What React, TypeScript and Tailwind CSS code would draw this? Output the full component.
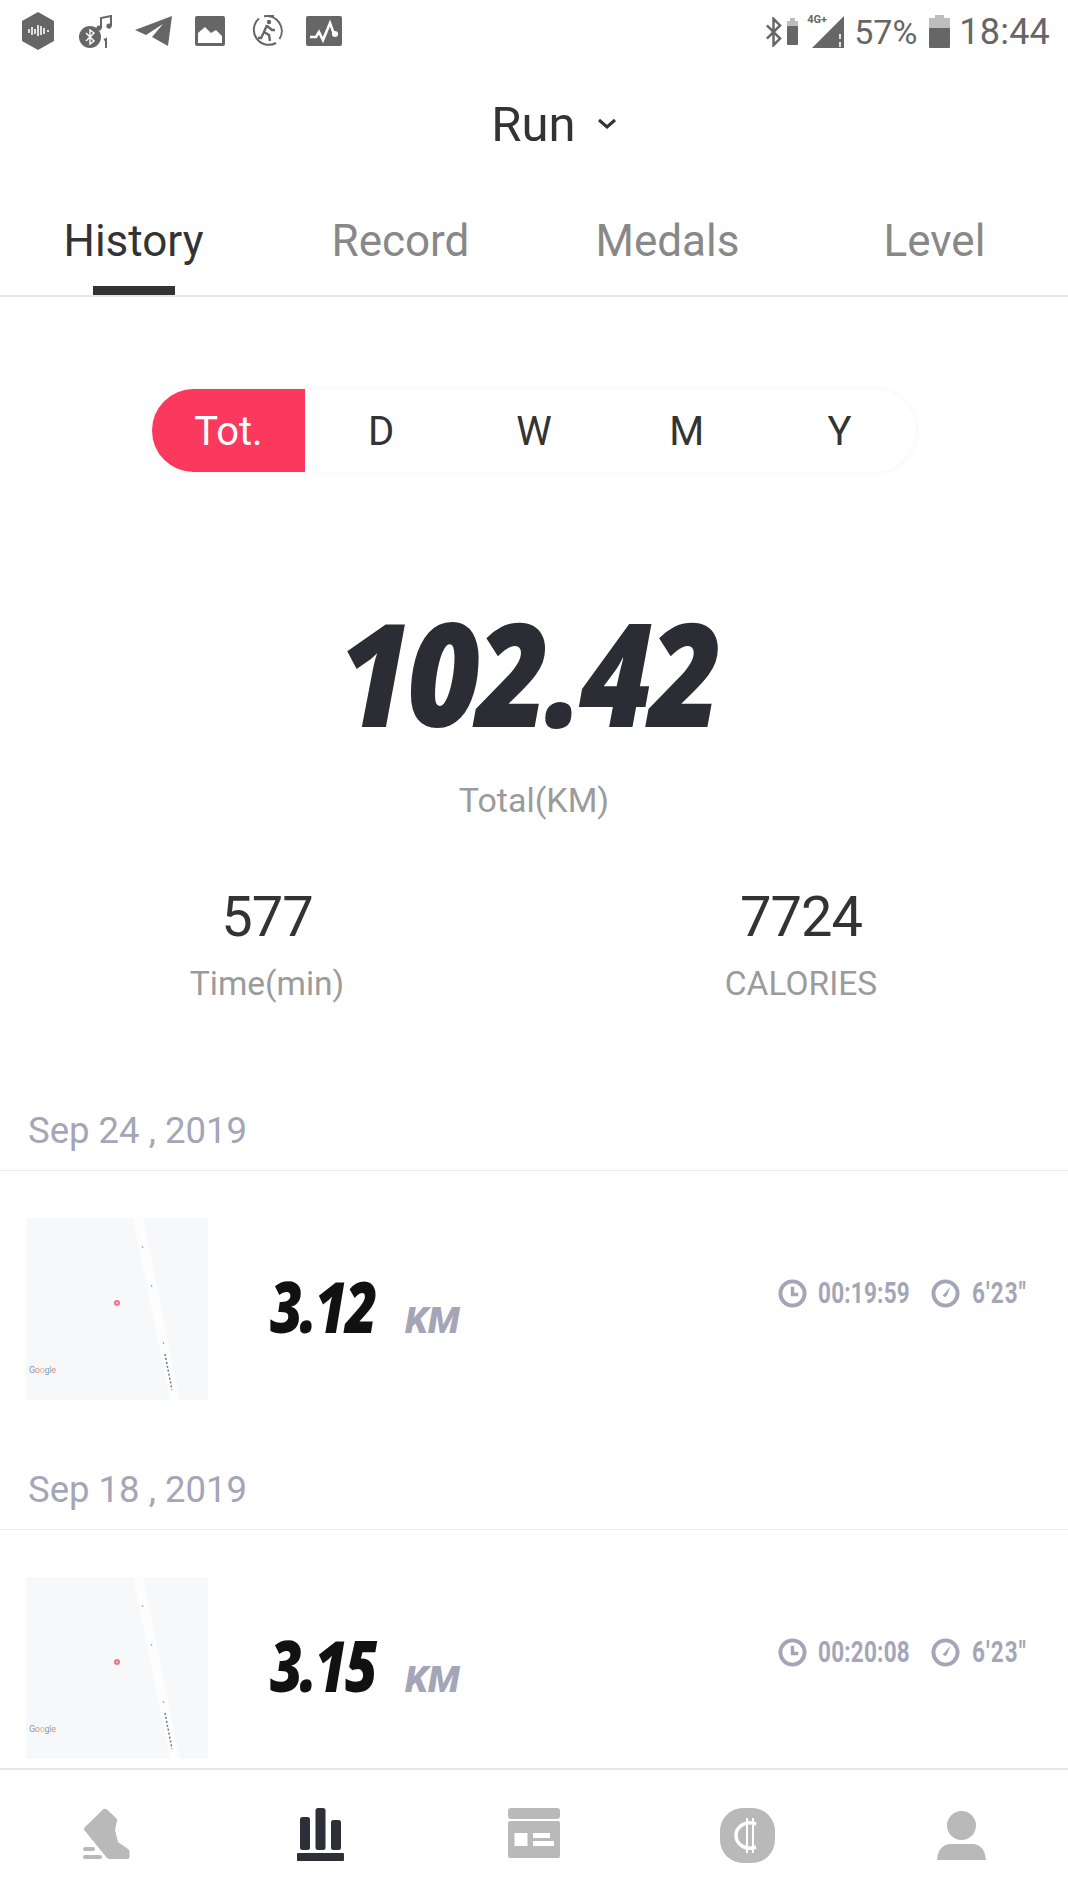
const grayIcon = "#666666"
const navGray = "#b9b9b9"
const navDark = "#2e3038"
const metaColor = "#a5a5b8"

function StatusIcons() {
    return (
        <div className="flex items-center mt-[-1px]">
            <svg width="34" height="38" viewBox="0 0 34 38" className="ml-[21px]">
                <path d="M17 0 L33 9 V29 L17 38 L1 29 V9 Z" fill={grayIcon} />
                <path d="M8 17v4M11 15v8M14 17v5M17 13v11M20 14v9M23 16v6M27 18v2" stroke="#fff" strokeWidth="1.6" fill="none" />
            </svg>
            <svg width="34" height="33" viewBox="0 0 34 33" className="ml-[24px]">
                <circle cx="11" cy="22" r="11" fill={grayIcon} />
                <path d="M7 18l8 8-4 3V15l4 3-8 8" stroke="#fff" strokeWidth="1.4" fill="none" />
                <path d="M22 13V3l10-2v10" stroke={grayIcon} strokeWidth="2" fill="none" />
                <circle cx="20" cy="13" r="2.6" fill={grayIcon} />
                <circle cx="30" cy="11" r="2.6" fill={grayIcon} />
                <path d="M25 25l2-1v9" stroke={grayIcon} strokeWidth="2" fill="none" />
            </svg>
            <svg width="37" height="32" viewBox="0 0 37 32" className="ml-[22px]">
                <path d="M0 15 L37 1 L33 31 L17 22 L28 9 L11 20 Z" fill={grayIcon} />
            </svg>
            <svg width="30" height="30" viewBox="0 0 30 30" className="ml-[23px]">
                <rect width="30" height="30" rx="2" fill={grayIcon} />
                <path d="M3 27V17l7-6 6 6 5-3 6 6v7z" fill="#fff" />
            </svg>
            <svg width="34" height="34" viewBox="0 0 34 34" className="ml-[25px]">
                <path d="M9 4.500A15 15 0 0 0 26 29M29.500 25A15 15 0 0 0 14 2.300M18 2h6" stroke={grayIcon} strokeWidth="2" fill="none" />
                <circle cx="19" cy="8" r="2.200" fill={grayIcon} />
                <path d="M17 11l-3 7 5 3 1 6M14 18l-3 6-3 0M17 12l5 4 3 0" stroke={grayIcon} strokeWidth="2.400" fill="none" />
            </svg>
            <svg width="36" height="30" viewBox="0 0 36 30" className="ml-[22px]">
                <rect width="36" height="30" rx="2" fill={grayIcon} />
                <path d="M4 21h6l3-5 4 8 7-17 4 11" stroke="#fff" strokeWidth="2.600" fill="none" />
                <circle cx="29" cy="18" r="3" fill="#fff" />
            </svg>
        </div>
    )
}

function StatusRight() {
    return (
        <div className="flex items-center text-[#666666] leading-none mr-[18px]">
            <svg width="17" height="30" viewBox="0 0 18 30">
                <path d="M2 8l14 14-7 7V1l7 7L2 22" stroke={grayIcon} strokeWidth="2.600" fill="none" />
            </svg>
            <svg width="11" height="27" viewBox="0 0 11 27" className="ml-[5px]">
                <rect x="3" width="5" height="3" fill="#bdbdbd" />
                <rect y="3" width="11" height="7" fill="#bdbdbd" />
                <rect y="8" width="11" height="19" rx="1" fill={grayIcon} />
            </svg>
            <div className="relative w-[36px] h-[33px] ml-[10px]">
                <svg width="32" height="32" viewBox="0 0 32 32" className="absolute right-0 bottom-0">
                    <path d="M0 32 L32 0 V32 Z" fill={grayIcon} />
                    <path d="M28 18v5M28 26v5" stroke="#fff" strokeWidth="1.600" />
                </svg>
                <span className="absolute left-[-1px] top-[-1px] text-[11px] font-bold leading-none">4G+</span>
            </div>
            <span className="ml-[10px] text-[34px]">57%</span>
            <svg width="21" height="33" viewBox="0 0 21 33" className="ml-[12px]">
                <rect x="6" width="9" height="3" fill="#bdbdbd" />
                <rect y="3" width="21" height="13" fill="#bdbdbd" />
                <rect y="13" width="21" height="20" rx="1" fill={grayIcon} />
            </svg>
            <span className="ml-[9px] text-[36px] tracking-[0.2px]">18:44</span>
        </div>
    )
}

function Tabs() {
    const tabs = ["History", "Record", "Medals", "Level"]
    return (
        <div className="relative grid grid-cols-4 h-[82px] mt-[60px] border-b-2 border-[#e8e8e8]">
            {tabs.map((t, i) => (
                <div key={t} className="relative flex justify-center">
                    <span className={i === 0 ? "text-[44px] leading-[52px] text-[#333333]" : "text-[44px] leading-[52px] text-[#888888]"}>{t}</span>
                    {i === 0 && <div className="absolute bottom-0 w-[82px] h-[9px] bg-[#333333]" />}
                </div>
            ))}
        </div>
    )
}

function PeriodSwitch() {
    const items = ["D", "W", "M", "Y"]
    return (
        <div className="flex justify-center mt-[92px]">
            <div className="flex w-[764px] h-[83px] rounded-[42px] bg-white shadow-[0_0_6px_rgba(0,0,0,0.05)] overflow-hidden">
                <div className="flex items-center justify-center w-[153px] pt-[3px] bg-[#fb385e] text-white text-[40px]">Tot.</div>
                {items.map(t => (
                    <div key={t} className="flex items-center justify-center w-[153px] pt-[3px] text-[#333333] text-[40px]">{t}</div>
                ))}
            </div>
        </div>
    )
}

function MapThumb() {
    return (
        <div className="relative w-[182px] h-[182px] bg-[#f7f8fa] overflow-hidden shrink-0">
            <svg width="182" height="182" viewBox="0 0 182 182" className="absolute inset-0">
                <path d="M107 0h10l37 182h-10z" fill="#fdfdfd" />
                <path d="M116 28l1 2M125 67l1 2M137 124l1 2" stroke="#999999" strokeWidth="1" />
                <path d="M139 136l7 36" stroke="#777777" strokeWidth="1.500" strokeDasharray="2 2" />
                <circle cx="91" cy="85" r="3" fill="#e8788c" />
                <circle cx="91" cy="85" r="1" fill="#f3c9d0" />
            </svg>
            <span className="absolute left-[3px] top-[148px] text-[9px] leading-none tracking-[-0.3px]">
                <span className="text-[#7a9ad8]">G</span>
                <span className="text-[#e08a80]">o</span>
                <span className="text-[#e3c070]">o</span>
                <span className="text-[#7a9ad8]">g</span>
                <span className="text-[#8cbf8c]">l</span>
                <span className="text-[#e08a80]">e</span>
            </span>
        </div>
    )
}

function RunRow({ date, km, time, pace }: { date: string, km: string, time: string, pace: string }) {
    return (
        <div>
            <div className="h-[62px] pl-[28px] text-[36.500px] leading-[44px] text-[#a5a5b8] border-b border-[#ececec]">{date}</div>
            <div className="flex h-[297px] pl-[26px] pt-[47px]">
                <MapThumb />
                <div className="flex items-baseline h-fit ml-[62px] mt-[56px]">
                    <span className="w-[135px] text-[70px] leading-[64px] font-extrabold italic text-[#111111] font-['Open_Sans',sans-serif] tracking-[-3px] scale-x-[0.8] origin-left">{km}</span>
                    <span className="text-[37px] leading-none font-black italic text-[#a5a5b8]">KM</span>
                </div>
                <div className="flex items-center h-fit ml-auto mr-[41px] mt-[59px] text-[30px] leading-[32px] font-bold text-[#a5a5b8] font-['Roboto',sans-serif]">
                    <svg width="29" height="29" viewBox="0 0 30 30">
                        <circle cx="15" cy="15" r="12.500" stroke={metaColor} strokeWidth="4" fill="none" />
                        <path d="M15 8v8h6" stroke={metaColor} strokeWidth="3.500" fill="none" />
                    </svg>
                    <span className="ml-[11px] w-[90px] scale-x-75 origin-left tracking-[0.3px] whitespace-nowrap">{time}</span>
                    <svg width="29" height="29" viewBox="0 0 30 30" className="ml-[23px]">
                        <circle cx="15" cy="15" r="12.500" stroke={metaColor} strokeWidth="4" fill="none" />
                        <path d="M20 8l-5 6-3 3 3 2 2-3z" fill={metaColor} />
                    </svg>
                    <span className="ml-[12px] w-[55px] scale-x-75 origin-left tracking-[1.5px] whitespace-nowrap">{pace}</span>
                </div>
            </div>
        </div>
    )
}

function BottomNav() {
    return (
        <div className="absolute left-0 right-0 bottom-0 h-[132px] bg-white border-t-2 border-[#e8e8e8] grid grid-cols-5 pt-[38px]">
            <div className="flex justify-center">
                <svg width="47" height="52" viewBox="0 0 47 52">
                    <path d="M20 1.500Q22 0 24 1.500L33 10Q35 12 33.500 15L32 22L35 34L45 41Q46.500 42 46.500 44V49Q46.500 51 44 51H27Q25 51 24 50L2 23Q0 21 2 19Z" fill={navGray} />
                    <rect x="0" y="39" width="12" height="4" rx="2" fill={navGray} />
                    <rect x="0" y="47" width="19" height="4" rx="2" fill={navGray} />
                </svg>
            </div>
            <div className="flex justify-center">
                <svg width="47" height="53" viewBox="0 0 47 53">
                    <rect x="3" y="9" width="10" height="33" rx="2.500" fill={navDark} />
                    <rect x="18.500" y="0" width="10" height="42" rx="2.500" fill={navDark} />
                    <rect x="34" y="12" width="10" height="30" rx="2.500" fill={navDark} />
                    <rect y="45" width="47" height="8" rx="1" fill={navDark} />
                </svg>
            </div>
            <div className="flex justify-center">
                <svg width="52" height="50" viewBox="0 0 52 50">
                    <rect width="52" height="11" rx="3" fill={navGray} />
                    <rect y="13" width="52" height="37" rx="2" fill={navGray} />
                    <rect x="6.500" y="25" width="13" height="13" fill="#fff" />
                    <rect x="25" y="25" width="17" height="5" fill="#fff" />
                    <rect x="25" y="33" width="21" height="5" fill="#fff" />
                </svg>
            </div>
            <div className="flex justify-center">
                <svg width="55" height="55" viewBox="0 0 55 55">
                    <rect width="55" height="55" rx="23" fill={navGray} />
                    <path d="M36 16Q28 13 22 17Q16 21 16 27.500Q16 34 22 38Q28 42 36 39" stroke="#fff" strokeWidth="3.500" fill="none" />
                    <path d="M27 10v35M33 10v35" stroke="#fff" strokeWidth="2" fill="none" />
                </svg>
            </div>
            <div className="flex justify-center">
                <svg width="49" height="49" viewBox="0 0 49 49" className="mt-[3px]">
                    <circle cx="24.500" cy="14.500" r="14.500" fill={navGray} />
                    <path d="M0 49C1 38 6 33 14 33H35C43 33 48 38 49 49Z" fill={navGray} />
                </svg>
            </div>
        </div>
    )
}

export default function App() {
    return (
        <div className="relative w-[1068px] h-[1900px] bg-white overflow-hidden font-['Roboto',sans-serif]">
            <div className="flex justify-between items-center pt-[11px] h-[52px]">
                <StatusIcons />
                <StatusRight />
            </div>

            <div className="flex items-center justify-center h-[60px] mt-[43px] pl-[40px] text-[49px] text-[#333333]">
                Run
                <svg width="20" height="12" viewBox="0 0 20 12" className="ml-[21px] mt-[-2px]">
                    <path d="M2 2l8 7 8-7" stroke="#333333" strokeWidth="3" fill="none" />
                </svg>
            </div>

            <Tabs />
            <PeriodSwitch />

            <div className="flex justify-center mt-[139px] h-[120px] pr-[12px]">
                <div className="text-[144px] leading-[120px] font-extrabold italic text-[#2b2c34] font-['Open_Sans',sans-serif] tracking-[-5px] scale-x-[0.88]">102.42</div>
            </div>
            <div className="mt-[47px] text-center text-[34px] leading-[44px] text-[#9b9b9b]">Total(KM)</div>

            <div className="grid grid-cols-2 mt-[64px]">
                <div className="text-center">
                    <div className="text-[56px] leading-[62px] tracking-[-1px] text-[#333333]">577</div>
                    <div className="mt-[14px] text-[33.500px] leading-[44px] text-[#9b9b9b]">Time(min)</div>
                </div>
                <div className="text-center">
                    <div className="text-[56px] leading-[62px] tracking-[-1px] text-[#333333]">7724</div>
                    <div className="mt-[14px] text-[33.500px] leading-[44px] text-[#9b9b9b]">CALORIES</div>
                </div>
            </div>

            <div className="mt-[103px]">
                <RunRow date="Sep 24 , 2019" km="3.12" time="00:19:59" pace={"6'23\""} />
                <RunRow date="Sep 18 , 2019" km="3.15" time="00:20:08" pace={"6'23\""} />
            </div>

            <BottomNav />
        </div>
    )
}
